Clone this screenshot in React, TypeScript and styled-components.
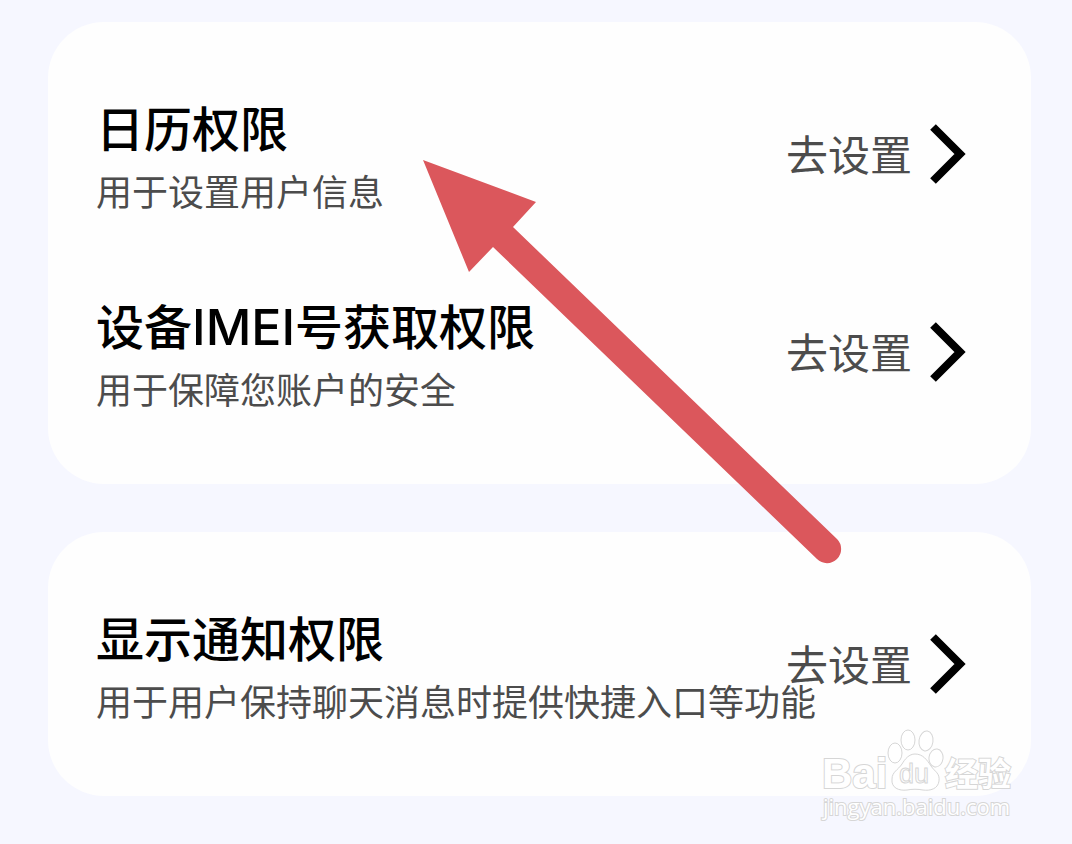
import React from 'react';
import styled, { createGlobalStyle } from 'styled-components';

const GlobalStyle = createGlobalStyle`
  * {
    box-sizing: border-box;
  }

  body {
    margin: 0;
    background: #f6f7ff;
    color: #000;
    font-family: Inter, 'Noto Sans CJK SC', sans-serif;
  }
`;

const Page = styled.main`
  position: relative;
  display: flex;
  flex-direction: column;
  gap: 48px;
  padding: 22px 41px 48px 48px;
`;

const Card = styled.section`
  position: relative;
  padding: 33px 65px 33px 48px;
  border-radius: 56px;
  background: #fefefe;
`;

const Row = styled.div`
  display: flex;
  align-items: center;
  justify-content: space-between;
  height: 198px;
`;

const Texts = styled.div`
  flex: 1;
  min-width: 0;
  padding-top: 14px;
  white-space: nowrap;
`;

const Title = styled.h2`
  margin: 0;
  font-size: 48px;
  font-weight: 500;
  line-height: 64px;
`;

const Latin = styled.span`
  font-size: 50px;
  line-height: 1;
`;

const Description = styled.p`
  margin: 0;
  color: #4c4c4c;
  font-size: 36px;
  line-height: 62px;
`;

const SettingsButton = styled.button`
  display: flex;
  flex: none;
  align-items: center;
  gap: 18px;
  padding: 0;
  border: 0;
  background: none;
  color: #4c4c4c;
  font: inherit;
  font-size: 42px;
  line-height: 60px;
  cursor: pointer;
`;

const SettingsLabel = styled.span`
  padding-top: 4px;
`;

const Chevron = styled.svg`
  display: block;
  width: 36px;
  height: 60px;
`;

const Pointer = styled.svg`
  position: absolute;
  top: 160px;
  left: 423px;
  width: 419px;
  height: 404px;
  pointer-events: none;
`;

const Watermark = styled.svg`
  position: absolute;
  right: 11px;
  bottom: -29px;
  width: 205px;
  height: 100px;
  pointer-events: none;
`;

type Permission = { title: React.ReactNode; description: string };

const calendar: Permission = { title: '日历权限', description: '用于设置用户信息' };
const imei: Permission = {
  title: (
    <>
      设备<Latin>IMEI</Latin>号获取权限
    </>
  ),
  description: '用于保障您账户的安全',
};
const notice: Permission = {
  title: '显示通知权限',
  description: '用于用户保持聊天消息时提供快捷入口等功能',
};

function PermissionRow({ title, description }: Permission) {
  return (
    <Row>
      <Texts>
        <Title>{title}</Title>
        <Description>{description}</Description>
      </Texts>
      <SettingsButton type="button">
        <SettingsLabel>去设置</SettingsLabel>
        <Chevron viewBox="0 0 36 60" aria-hidden="true">
          <path d="M3 3 L30 30 L3 57" fill="none" stroke="#000" strokeWidth="8" />
        </Chevron>
      </SettingsButton>
    </Row>
  );
}

function BaiduWatermark() {
  return (
    <Watermark viewBox="0 0 205 100" fill="#fff" stroke="#d6d6d6" strokeWidth="1">
      <text
        x="7"
        y="63"
        fontFamily="'Liberation Sans', sans-serif"
        fontSize="42"
        fontWeight="700"
        strokeWidth="2"
        paintOrder="stroke"
      >
        Bai
      </text>
      <ellipse cx="80" cy="28" rx="7" ry="10" />
      <ellipse cx="93" cy="15" rx="7" ry="10" />
      <ellipse cx="111" cy="16" rx="7" ry="10" transform="rotate(8 111 16)" />
      <ellipse cx="121" cy="33" rx="7" ry="9" transform="rotate(8 121 33)" />
      <path d="M100 29 C108 29 112 35 116 41 C120 47 125 48 124 56 C123 64 115 66 108 65 C103 64 97 64 92 65 C84 66 76 63 77 54 C77 47 83 45 87 39 C90 34 94 29 100 29 Z" />
      <text x="84" y="58" fontFamily="'Liberation Sans', sans-serif" fontSize="27">du</text>
      <text
        x="130"
        y="61"
        fontFamily="'Noto Sans CJK SC', sans-serif"
        fontSize="33"
        fontWeight="700"
        strokeWidth="2"
        paintOrder="stroke"
      >
        经验
      </text>
      <text
        x="8"
        y="90"
        fontFamily="'Open Sans', sans-serif"
        fontSize="22"
        strokeWidth="2"
        paintOrder="stroke"
      >
        jingyan.baidu.com
      </text>
    </Watermark>
  );
}

export default function App() {
  return (
    <>
      <GlobalStyle />
      <Page>
        <Card>
          <PermissionRow {...calendar} />
          <PermissionRow {...imei} />
        </Card>
        <Card>
          <PermissionRow {...notice} />
          <BaiduWatermark />
        </Card>
        <Pointer viewBox="0 0 419 404" aria-hidden="true">
          <path
            d="M0 0 L113 42 L90 67 L414 379 A14 14 0 0 1 394 399 L70 87 L46 112 Z"
            fill="#db575c"
          />
        </Pointer>
      </Page>
    </>
  );
}
